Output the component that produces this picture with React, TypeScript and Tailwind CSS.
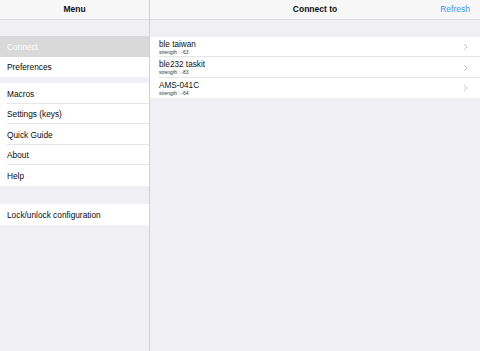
import React from "react";

const font = { fontFamily: '"Liberation Sans", Arial, sans-serif' };

function Row({ label, selected, last }: { label: string; selected?: boolean; last?: boolean }) {
  return (
    <div className={`relative h-[20.6px] flex items-center pl-[7px] pt-[1px] ${selected ? "bg-[#d9d9d9] text-white" : "bg-white text-[#0a0a0a]"}`}>
      <span className="text-[8.3px] leading-none">{label}</span>
      {!last && !selected && <div className="absolute bottom-0 left-[7px] right-0 h-px bg-[#e6e6ea]" />}
    </div>
  );
}

function Device({ name, strength, last }: { name: string; strength: string; last?: boolean }) {
  return (
    <div className="relative h-[20.6px] bg-white flex items-center pl-[9px] pr-[9px] pt-[1px]">
      <div className="flex-1 flex flex-col justify-center">
        <span className="text-[8.2px] leading-[9px] text-[#111]">{name}</span>
        <span className="text-[5px] leading-[6px] text-[#333]">{strength}</span>
      </div>
      <svg width="5" height="8" viewBox="0 0 5 8" className="mr-[3px]">
        <path d="M1 1 L4 4 L1 7" fill="none" stroke="#c7c7cc" strokeWidth="1" />
      </svg>
      {!last && <div className="absolute bottom-0 left-[9px] right-0 h-px bg-[#e6e6ea]" />}
    </div>
  );
}

export default function App() {
  return (
    <div className="w-[480px] h-[351px] flex bg-[#efeff4] overflow-hidden" style={font}>
      <div className="w-[150px] flex flex-col border-r border-[#cfcfd4]">
        <div className="h-[20px] bg-[#f7f7f7] border-b border-[#dcdce0] flex items-center justify-center">
          <span className="text-[8.5px] font-semibold text-[#111]">Menu</span>
        </div>
        <div className="h-[16px]" />
        <Row label="Connect" selected />
        <Row label="Preferences" last />
        <div className="h-[5.8px]" />
        <Row label="Macros" />
        <Row label="Settings (keys)" />
        <Row label="Quick Guide" />
        <Row label="About" />
        <Row label="Help" last />
        <div className="h-[18px]" />
        <Row label="Lock/unlock configuration" last />
      </div>
      <div className="flex-1 flex flex-col">
        <div className="h-[20px] bg-[#f7f7f7] border-b border-[#dcdce0] flex items-center justify-center relative">
          <span className="text-[8.5px] font-semibold text-[#111]">Connect to</span>
          <span className="absolute right-[10px] text-[8.5px] text-[#3d95f7]">Refresh</span>
        </div>
        <div className="h-[16.5px]" />
        <Device name="ble taiwan" strength="strength : -63" />
        <Device name="ble232 taskit" strength="strength : -83" />
        <Device name="AMS-041C" strength="strength : -64" last />
      </div>
    </div>
  );
}
